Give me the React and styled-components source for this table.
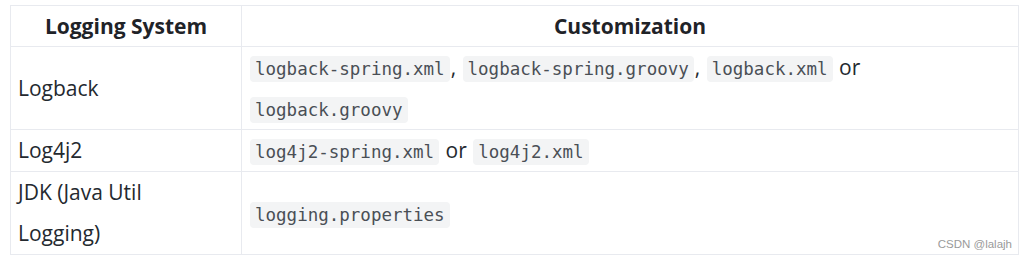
import React from 'react';
import styled, { createGlobalStyle } from 'styled-components';

const GlobalStyle = createGlobalStyle`
  body {
    margin: 0;
    background: #fff;
  }
`;

const Page = styled.div`
  position: relative;
  width: 1026px;
  height: 260px;
  padding: 5px 0 0 10px;
  box-sizing: border-box;
  font-family: "Open Sans", "Noto Sans", sans-serif;
`;

const Table = styled.table`
  width: 1009px;
  border-collapse: collapse;
  table-layout: fixed;
  color: #24292f;
  font-size: 21px;
`;

const HeadCell = styled.th`
  height: 40px;
  padding: 0 8px;
  border: 1px solid #e8eaef;
  font-weight: 700;
  text-align: center;
  line-height: 28px;
  color: #1f2328;
`;

const Cell = styled.td`
  padding: ${p => (p.$name ? '0 18px 0 7px' : '0 7px')};
  border: 1px solid #e8eaef;
  line-height: 41px;
  vertical-align: middle;
`;

const Code = styled.code`
  font-family: "DejaVu Sans Mono", "Liberation Mono", monospace;
  font-size: 17.5px;
  line-height: 1;
  color: #4a4f55;
  background: #f3f4f5;
  border-radius: 4px;
  padding: 3px 5px;
  margin: 0 1px;
`;

const Watermark = styled.div`
  position: absolute;
  right: 14px;
  bottom: 10px;
  font-family: "Liberation Sans", Arial, sans-serif;
  font-size: 11.5px;
  color: #9a9a9a;
`;

const rows = [
  {
    name: 'Logback',
    files: [
      ['logback-spring.xml', ', '],
      ['logback-spring.groovy', ', '],
      ['logback.xml', ' or '],
      ['logback.groovy', ''],
    ],
  },
  {
    name: 'Log4j2',
    files: [
      ['log4j2-spring.xml', ' or '],
      ['log4j2.xml', ''],
    ],
  },
  {
    name: 'JDK (Java Util Logging)',
    files: [['logging.properties', '']],
  },
];

export default function App() {
  return (
    <Page>
      <GlobalStyle />
      <Table>
        <colgroup>
          <col style={{ width: 231 }} />
          <col />
        </colgroup>
        <thead>
          <tr>
            <HeadCell>Logging System</HeadCell>
            <HeadCell>Customization</HeadCell>
          </tr>
        </thead>
        <tbody>
          {rows.map(r => (
            <tr key={r.name}>
              <Cell $name>{r.name}</Cell>
              <Cell>
                {r.files.map(([f, sep]) => (
                  <React.Fragment key={f}>
                    <Code>{f}</Code>
                    {sep}
                  </React.Fragment>
                ))}
              </Cell>
            </tr>
          ))}
        </tbody>
      </Table>
      <Watermark>CSDN @lalajh</Watermark>
    </Page>
  );
}
